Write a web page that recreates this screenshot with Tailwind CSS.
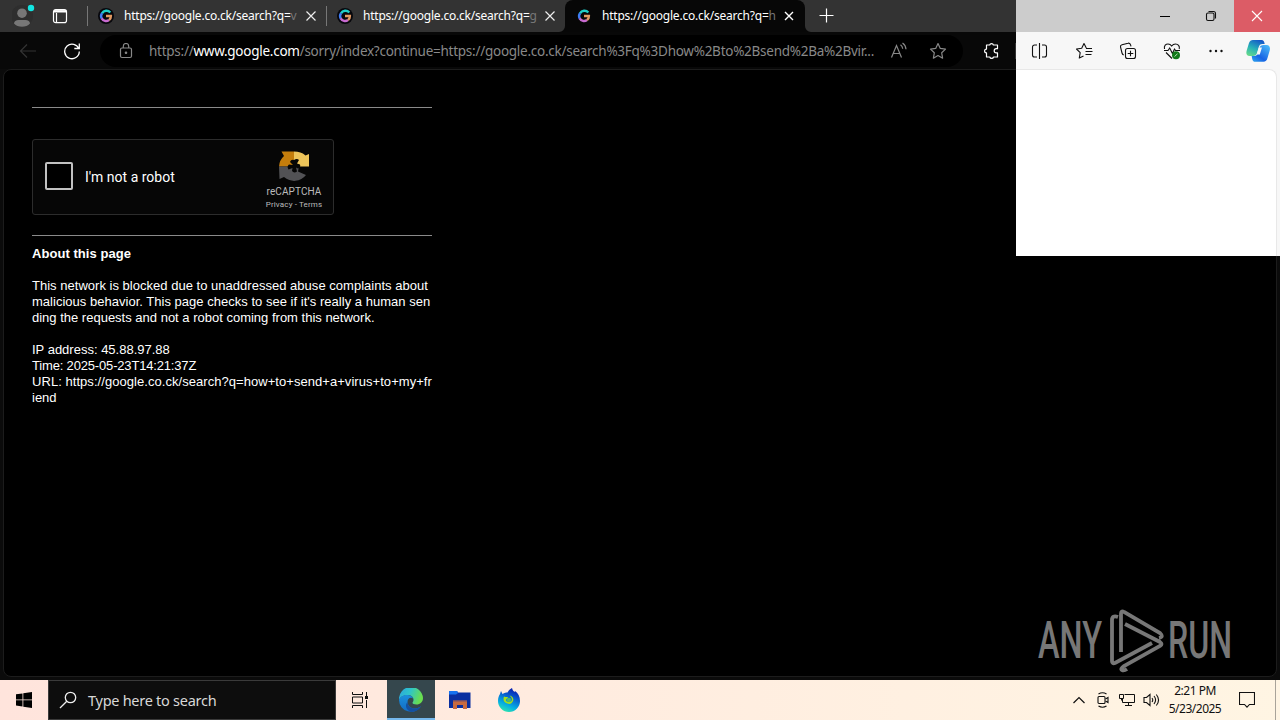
<!DOCTYPE html>
<html lang="en">

<head>
  <meta charset="utf-8" />
  <meta name="viewport" content="width=device-width, initial-scale=1.0" />
  <title>https://google.co.ck/search</title>
  <script src="https://cdn.jsdelivr.net/npm/@tailwindcss/browser@4"></script>
</head>

<body class="w-[1280px] h-[720px] overflow-hidden bg-black flex flex-col font-['Noto_Sans',sans-serif]">
  <!-- google logo, used by every tab -->
  <svg class="absolute w-0 h-0">
    <defs>
      <g id="google" fill="none" stroke-width="2.4">
        <path d="M12.3 4.6A5 5 0 0 0 4 5.4" stroke="#20cfc8" />
        <path d="M4 5.2A5 5 0 0 0 3.8 10.6" stroke="#3f7df5" />
        <path d="M3.7 10.4A5 5 0 0 0 11 12.1" stroke="#c86bd0" />
        <path d="M8 8H12.9A5 5 0 0 1 11 12.1" stroke="#e39a62" />
      </g>
    </defs>
  </svg>

  <!-- TAB BAR -->
  <div class="flex h-8 shrink-0">
    <div class="flex w-[1016px] bg-[#333333]">
      <div class="flex w-[87px] shrink-0 items-center">
        <svg class="ml-3 w-6 h-8" viewBox="0 0 24 32">
          <circle cx="10" cy="16" r="11" fill="#2e2e2e" />
          <circle cx="10" cy="13.2" r="4.8" fill="#777" />
          <path d="M2 23.500c0-2 2-3.500 4.500-3.500h7c2.500 0 4.500 1.500 4.500 3.500-2 2.200-4.500 3.300-8 3.300s-6-1.100-8-3.300z" fill="#777" />
          <circle cx="19" cy="8" r="3.2" fill="#12e5e2" />
        </svg>
        <svg class="ml-4 w-4 h-4" viewBox="0 0 16 16" fill="none" stroke="#fff" stroke-width="1.2">
          <rect x="1.500" y="1.600" width="13" height="13" rx="2.2" />
          <path d="M2 3.300h12" stroke-width="2.400" />
          <path d="M4.500 5v9.500" stroke-width="1.200" />
        </svg>
      </div>
      <!-- tab 1 -->
      <div class="flex w-[239px] shrink-0 items-center">
        <div class="w-px h-5 bg-[#777]"></div>
        <svg class="ml-[10px] w-4 h-4" viewBox="0 0 16 16"><circle cx="8" cy="8" r="8" fill="#07070c" /><use href="#google" /></svg>
        <p class="ml-[10px] w-[174px] overflow-hidden whitespace-nowrap text-[12px] text-white tracking-[-0.22px]">https://google.co.ck/search?q=<span class="text-[#777]">v</span></p>
        <svg class="ml-[6px] w-[14px] h-[14px]" viewBox="0 0 14 14" stroke="#eee" stroke-width="1.2"><path d="M2.500 2.500l9 9M11.500 2.500l-9 9" /></svg>
      </div>
      <!-- tab 2 -->
      <div class="flex w-[239px] shrink-0 items-center">
        <div class="w-px h-5 bg-[#777]"></div>
        <svg class="ml-[10px] w-4 h-4" viewBox="0 0 16 16"><circle cx="8" cy="8" r="8" fill="#07070c" /><use href="#google" /></svg>
        <p class="ml-[10px] w-[174px] overflow-hidden whitespace-nowrap text-[12px] text-white tracking-[-0.22px]">https://google.co.ck/search?q=<span class="text-[#777]">g</span></p>
        <svg class="ml-[6px] w-[14px] h-[14px]" viewBox="0 0 14 14" stroke="#eee" stroke-width="1.2"><path d="M2.500 2.500l9 9M11.500 2.500l-9 9" /></svg>
      </div>
      <!-- active tab -->
      <div class="relative flex w-[240px] shrink-0 items-center bg-[#070707] rounded-t-lg">
        <svg class="absolute -left-[6px] bottom-0 w-[6px] h-[6px]" viewBox="0 0 6 6"><path d="M6 0v6H0a6 6 0 0 0 6-6z" fill="#070707" /></svg>
        <svg class="absolute -right-[6px] bottom-0 w-[6px] h-[6px]" viewBox="0 0 6 6"><path d="M0 0v6h6a6 6 0 0 1-6-6z" fill="#070707" /></svg>
        <svg class="ml-[11px] w-4 h-4" viewBox="0 0 16 16"><use href="#google" /></svg>
        <p class="ml-[10px] w-[174px] overflow-hidden whitespace-nowrap text-[12px] text-white tracking-[-0.22px]">https://google.co.ck/search?q=<span class="text-[#777]">h</span></p>
        <svg class="ml-[6px] w-[14px] h-[14px]" viewBox="0 0 14 14" stroke="#fff" stroke-width="1.4"><path d="M3 3l8 8M11 3l-8 8" /></svg>
      </div>
      <svg class="ml-[13px] mt-2 w-4 h-4" viewBox="0 0 16 16" stroke="#fff" stroke-width="1.200"><path d="M1.500 7.500h14M8.500 .5v14" /></svg>
    </div>
    <!-- window buttons -->
    <div class="flex flex-1 justify-end bg-[#cccccc]">
      <svg class="w-[46px] h-8" viewBox="0 0 46 32" stroke="#000"><path d="M18 16.500h10" /></svg>
      <svg class="w-[46px] h-8" viewBox="0 0 46 32" fill="none" stroke="#111" stroke-width="1.100">
        <rect x="18.500" y="13" width="7.500" height="7.500" rx="1.500" />
        <path d="M20.500 11.500h5a2 2 0 0 1 2 2v5" />
      </svg>
      <svg class="w-[46px] h-8 bg-[#dc5c66]" viewBox="0 0 46 32" stroke="#fff" stroke-width="1.100"><path d="M18 11l10 10M28 11l-10 10" /></svg>
    </div>
  </div>

  <!-- TOOLBAR -->
  <div class="flex h-[37px] shrink-0">
    <div class="flex w-[1016px] items-center bg-[#080808]">
      <svg class="ml-[19px] w-[18px] h-[18px]" viewBox="0 0 18 18" fill="none" stroke="#333" stroke-width="1.200"><path d="M17 9H1.500M8 2.500L1.500 9 8 15.500" /></svg>
      <svg class="ml-[26px] w-[18px] h-[18px]" viewBox="0 0 18 18" fill="none" stroke="#fff" stroke-width="1.300"><path d="M15.900 7A7.300 7.300 0 1 0 16.300 9.500M16.300 1.500V6.500H11.300" /></svg>
      <div class="ml-[19px] flex w-[863px] h-8 items-center rounded-full bg-black">
        <svg class="ml-[18px] w-4 h-4" viewBox="0 0 16 16" fill="none" stroke="#888" stroke-width="1.200">
          <rect x="2.500" y="5" width="11" height="9.500" rx="1.500" />
          <path d="M5.300 5V3.200a2.700 2.700 0 0 1 5.400 0V5" />
          <circle cx="8" cy="9.700" r=".7" fill="#888" />
        </svg>
        <p class="ml-[15px] w-[727px] shrink-0 overflow-hidden whitespace-nowrap text-[13.5px] leading-8 text-[#888] tracking-[-0.26px]">https://<span class="text-white">www.google.com</span>/sorry/index?continue=https://google.co.ck/search%3Fq%3Dhow%2Bto%2Bsend%2Ba%2Bvir...</p>
        <svg class="ml-[14px] w-[18px] h-[18px]" viewBox="0 0 18 18" fill="none" stroke="#888" stroke-width="1.200">
          <path d="M1.500 15.500L6.500 3.500l5 12M3.300 11.500h6.500M10.500 2.800q2 1.500 2.200 4M12.500 1q3.200 2.200 3.500 6.200" />
        </svg>
        <svg class="ml-[21px] w-[18px] h-[18px]" viewBox="0 0 18 18" fill="none" stroke="#888" stroke-width="1.200" stroke-linejoin="round">
          <path d="M9 1.500l2.300 4.900 5.200.7-3.800 3.700.9 5.400L9 13.600l-4.600 2.600.9-5.400L1.500 7.100l5.200-.7z" />
        </svg>
      </div>
      <svg class="ml-[20px] w-[18px] h-[18px]" viewBox="0 0 18 18" fill="none" stroke="#fff" stroke-width="1.200" stroke-linejoin="round">
        <path d="M3.500 3h3.200a1.900 1.900 0 0 1 3.700 0H14.500v3.700h-1.200a2 2 0 0 0 0 4.200H14.500V15h-4a1.900 1.900 0 0 1-3.700 0H3.500v-4.100a1.900 1.900 0 0 1 0-3.800z" />
      </svg>
      <div class="ml-auto w-px h-4 bg-[#333]"></div>
    </div>
    <div class="flex flex-1 items-center bg-[#f7f7f7]">
      <svg class="ml-[15px] w-[18px] h-[18px]" viewBox="0 0 18 18" fill="none" stroke="#111" stroke-width="1.100">
        <path d="M8.500 1v16M6 3H3.500A2 2 0 0 0 1.500 5v8a2 2 0 0 0 2 2H6M11 3h2.500a2 2 0 0 1 2 2v8a2 2 0 0 1-2 2H11" />
      </svg>
      <svg class="ml-[26px] w-[18px] h-[18px]" viewBox="0 0 18 18" fill="none" stroke="#111" stroke-width="1.100" stroke-linejoin="round">
        <path d="M11.300 6L9 1.500 6.700 6.200 1.500 7l3.700 3.700-.9 5.300L8.500 14M11 6.500h6M10.500 9.500h7M10.500 12.500h6" />
      </svg>
      <svg class="ml-[26px] w-[18px] h-[18px]" viewBox="0 0 18 18" fill="none" stroke="#111" stroke-width="1.100">
        <rect x="6.500" y="6.500" width="10" height="10" rx="2" />
        <path d="M11.500 8.700v5.600M8.700 11.500h5.600M4.700 13A3 3 0 0 1 3 11L1.500 5A2 2 0 0 1 3 2.700l6-1.500a2 2 0 0 1 2.500 1.500l.5 1.700" />
      </svg>
      <svg class="ml-[26px] w-[18px] h-[18px]" viewBox="0 0 18 18" fill="none" stroke="#111" stroke-width="1.100">
        <path d="M1.500 7C.7 3.500 3 2 5 2c2 0 3 1 3.700 2 .7-1 2-2 3.800-2 2.500 0 4.500 2 3.700 5M1 8.500h4l1.700-2.500 2.700 5.500L11.500 7l1 1.500H17M3 10.500l6 6" />
        <circle cx="13" cy="13.300" r="4" fill="#117a19" stroke="none" />
        <path d="M11.500 14.500l3-2.700" stroke="#b5ddb5" stroke-width="1" />
      </svg>
      <svg class="ml-[26px] w-[18px] h-[18px]" viewBox="0 0 18 18" fill="#111">
        <circle cx="3.500" cy="9" r="1.200" /><circle cx="9" cy="9" r="1.200" /><circle cx="14.500" cy="9" r="1.200" />
      </svg>
      <!-- copilot -->
      <svg class="ml-[21px] w-6 h-6" viewBox="0 0 24 24">
        <defs>
          <linearGradient id="cpa" x1=".2" y1="1" x2=".7" y2="0">
            <stop offset="0" stop-color="#65d98a" /><stop offset=".45" stop-color="#28b2b8" /><stop offset="1" stop-color="#1458c8" />
          </linearGradient>
          <linearGradient id="cpb" x1="0" y1="1" x2=".8" y2="0">
            <stop offset="0" stop-color="#2fa8ef" /><stop offset=".4" stop-color="#1763e4" /><stop offset="1" stop-color="#47b5f7" />
          </linearGradient>
        </defs>
        <path d="M7 1h8.500c2 0 2.700 1.500 3.200 4h-2.200c-2.300 0-3.200 1-3.900 3.500L11 14c-.8 2.300-1.800 3-4 3H3.500C.5 17-.2 14.500.7 11.500L3 4C3.700 2 5 1 7 1z" fill="url(#cpa)" />
        <path d="M17.500 6H20.500c3 0 4 2.500 3.200 5.500L21.500 19c-.7 2.500-2 3.800-4 3.800H9c-2 0-2.700-1.500-3.300-5.800H7.500c2.300 0 3.500-.5 4.200-2.500L13.500 9c.8-2.300 1.700-3 4-3z" fill="url(#cpb)" />
        <path d="M13 8.500h3L13.800 15.500H10.800z" fill="#f7f7f7" />
      </svg>
    </div>
  </div>

  <!-- PAGE -->
  <div class="relative flex h-[611px] shrink-0 bg-[#0b0b0b] px-[3px] pb-[3px]">
    <div class="flex-1 rounded-lg border border-[#1c1c1c] bg-black pl-7 pt-[37px]">
      <div class="w-[400px] h-px bg-[#8a8a8a]"></div>
      <!-- recaptcha -->
      <div class="mt-[31px] flex w-[302px] h-[76px] rounded-[3px] border border-[#2c2c2c] bg-[#060606]">
        <div class="ml-3 mt-[22px] w-7 h-7 border-2 border-[#c1c1c1] rounded-[2px] bg-black"></div>
        <p class="ml-3 mt-[27px] w-[140px] whitespace-nowrap font-[Roboto,sans-serif] text-[14px] leading-5 text-white">I'm not a robot</p>
        <div class="ml-[39px] flex w-[60px] flex-col items-center font-[Roboto,sans-serif] text-[#bbb]">
          <svg class="mt-[10px] w-8 h-8 shrink-0" viewBox="0 0 32 32">
            <path d="M1 16.500A15 15 0 0 1 6 6L3.500 1.500H16v15z" fill="#c47d0c" />
            <path d="M16 1.500c5 0 8 1 11.500 4L31 4v12.500H16z" fill="#edc45a" />
            <path d="M1 16.500h20l-1 5 8 3.500A15 15 0 0 1 6 27l-4.500 2z" fill="#525255" />
            <path d="M16 10q3-2 5 0l-2 3.500 3 1q1 3-2 4l-2-1 1 4q-3 2-5-.5l.5-3-4 1.500q-2-3 .5-5l4 .5-3-3q1-3 4-2z" fill="#060606" />
          </svg>
          <p class="mt-[3px] text-[10px] leading-[14px] tracking-[0.1px]">reCAPTCHA</p>
          <p class="whitespace-nowrap text-[8px] leading-[11px] tracking-[0.15px]">Privacy - Terms</p>
        </div>
      </div>
      <div class="mt-5 w-[400px] h-px bg-[#8a8a8a]"></div>
      <div class="mt-[10px] w-[400px] whitespace-nowrap font-['Liberation_Sans',Arial,sans-serif] text-[13px] leading-4 text-white">
        <p class="font-bold tracking-[0.05px]">About this page</p>
        <br>
        <p class="tracking-[0.02px]">This network is blocked due to unaddressed abuse complaints about</p>
        <p class="tracking-[0.02px]">malicious behavior. This page checks to see if it's really a human sen</p>
        <p>ding the requests and not a robot coming from this network.</p>
        <br>
        <p>IP address: 45.88.97.88</p>
        <p class="tracking-[-0.17px]">Time: 2025-05-23T14:21:37Z</p>
        <p class="tracking-[0.05px]">URL: https://google.co.ck/search?q=how+to+send+a+virus+to+my+fr</p>
        <p>iend</p>
      </div>
    </div>

    <!-- unpainted light area -->
    <div class="absolute right-0 top-0 w-[264px] h-[187px] overflow-hidden bg-[#f7f7f7]">
      <div class="w-[261px] h-[200px] rounded-tr-lg border-t border-r border-[#e8e8e8] bg-white"></div>
    </div>

    <!-- watermark -->
    <div class="absolute left-[1036px] top-[540px] w-[200px] h-[66px]">
      <svg class="w-[200px] h-[66px]" viewBox="-3 0 200 66" fill="none" stroke="#777" font-family="Roboto, sans-serif">
        <text x="-1" y="49" font-size="51" font-weight="500" fill="#777" stroke="none" textLength="64" lengthAdjust="spacingAndGlyphs">ANY</text>
        <text x="129" y="49" font-size="51" font-weight="500" fill="#777" stroke="none" textLength="64" lengthAdjust="spacingAndGlyphs">RUN</text>
        <path d="M79 8q-6-2-6 3v41q0 3 3 2l37-20M82 43V5q0-4 3-2l36 21q4 4-1 5M86 15l35 18q3 2 0 4L85 57q-4 3-2 4 2 1 5-1" stroke-width="3.800" />
      </svg>
    </div>
  </div>

  <!-- TASKBAR -->
  <div class="flex h-10 shrink-0 items-stretch bg-linear-to-r from-[#ffe4dc] to-[#fff5e3]">
    <div class="flex w-12 items-center justify-center">
      <svg class="w-4 h-4" viewBox="0 0 16 16" fill="#000"><path d="M0 2.300l6.500-.9v6.100H0zM7.300 1.300L16 0v7.500H7.300zM0 8.300h6.500v6.100L0 13.500zM7.300 8.300H16V16l-8.700-1.300z" /></svg>
    </div>
    <div class="flex w-72 items-center border border-[#3a3a3a] bg-[#0d0d0d]">
      <svg class="ml-[10px] w-[18px] h-[18px]" viewBox="0 0 18 18" fill="none" stroke="#eee" stroke-width="1.300"><circle cx="11.500" cy="6.500" r="5.200" /><path d="M7.800 10.200L1 17" /></svg>
      <p class="ml-[11px] pt-[2px] text-[14.5px] text-[#d8d8d8] whitespace-nowrap tracking-[-0.27px]">Type here to search</p>
    </div>
    <div class="flex w-[51px] items-center">
      <svg class="ml-4 w-4 h-4" viewBox="0 0 16 16" fill="none" stroke="#111"><path d="M.5 0v2.500h10V0M.5 16v-2.500h10V16M.5 5v6h10V5zM14.500 0v4M14.500 8v8" /><path d="M13 5.500h3" stroke-width="3" /></svg>
    </div>
    <div class="flex w-12 items-center justify-center border-b-2 border-[#76b9ed] bg-[#35474d]">
      <svg class="mt-[2px] w-6 h-6" viewBox="0 0 24 24">
        <defs>
          <linearGradient id="ea" x1="0" y1="0" x2="1" y2=".3"><stop offset="0" stop-color="#2ba4df" /><stop offset=".5" stop-color="#2fc5c8" /><stop offset="1" stop-color="#69de4f" /></linearGradient>
          <linearGradient id="eb" x1="0" y1="0" x2="0" y2="1"><stop offset="0" stop-color="#1b8fdc" /><stop offset="1" stop-color="#136cc4" /></linearGradient>
        </defs>
        <path d="M0 12A12 12 0 0 1 24 10c0 4-3 6.500-6.500 6.500-2.500 0-4-.8-4-1.700 0-.8 1-1 1-3C14.500 9 12 7 8.500 7 4 7 1 9.500 0 12z" fill="url(#ea)" />
        <path d="M0 12C1 8.500 5 6.800 8.500 7c3 .2 5 1.500 5.800 3.500C11 8.500 8.500 11 8.500 14c0 4 4 7 8 6.500 2-.2 4-1 5.700-2.400A12 12 0 0 1 0 12z" fill="url(#eb)" />
        <path d="M8.500 14c0 4 4 7 8 6.500 2-.2 4-1 5.700-2.400A12 12 0 0 1 12 24C7 22 5.500 17 8.500 14z" fill="#1450a0" />
      </svg>
    </div>
    <div class="flex w-[49px] items-center justify-center">
      <svg class="w-[22px] h-[18px]" viewBox="0 0 22 18">
        <path d="M0 0h8l1 1.500h12.500V17H0z" fill="#0a2fa0" /><path d="M0 0h8l1 2-2 1.500H0z" fill="#1672f0" />
        <path d="M4 9.500h14V18h-4v-4H8v4H4z" fill="#c96b40" /><path d="M4 9.500h14v1H4z" fill="#76506a" />
      </svg>
    </div>
    <div class="flex w-12 items-center justify-center">
      <svg class="ml-[2px] w-6 h-6" viewBox="0 0 24 24">
        <defs>
          <linearGradient id="ff" x1=".8" y1="0" x2=".4" y2="1"><stop offset="0" stop-color="#0710a8" /><stop offset=".4" stop-color="#0860d0" /><stop offset=".75" stop-color="#05b0e2" /><stop offset="1" stop-color="#2be0b0" /></linearGradient>
        </defs>
        <path d="M4 3l1.500 3c2-1.500 3.500-1.500 5-1.500C11.500 2.500 13 1 15 0c.3 2 1.500 3 2.500 4l.5-1c3 2 5 5.500 5 10a11 11 0 0 1-22 0c0-3 .7-5 2-7z" fill="url(#ff)" />
        <path d="M7 8.500c1.500.8 2.500.5 4 .5 0 1.500-2.500 1.800-2 3.500 1 2 4 2 5.500.5 1-1.500 0-4-2-5.500 3 .5 4.500 3 3.500 5.500-1.300 3-3.500 3.500-5.700 2.500-3.500-1-4.600-4-3.300-7z" fill="#a2df1c" />
        <circle cx="12" cy="12" r="2.300" fill="#4bb870" />
      </svg>
    </div>
    <!-- tray -->
    <div class="ml-auto flex items-center">
      <svg class="w-3 h-4" viewBox="0 0 12 16" fill="none" stroke="#111" stroke-width="1.200"><path d="M.5 11L6 5.500l5.500 5.500" /></svg>
      <svg class="ml-3 w-3 h-4" viewBox="0 0 12 16" fill="none" stroke="#111" stroke-width="1.100"><rect x="1" y="4.500" width="7" height="7" rx="1" /><path d="M8.500 7l2.500-1.500v5L8.500 9M1.500 2Q5.500-.5 9.500 2M1.500 14q4 2.500 8 0" /></svg>
      <svg class="ml-[10px] w-4 h-4" viewBox="0 0 16 16" fill="none" stroke="#111"><path d="M5.500 2.500h10v8h-12V7M9.500 10.500v3M6 13.500h7M.5 2.500h4v4h-4zM2.500 6.500v2" /></svg>
      <svg class="ml-[8px] w-[17px] h-4" viewBox="0 0 17 16" fill="none" stroke="#111" stroke-width="1.100"><path d="M1 5.500h2.500L7 2.500v11L3.500 10.500H1zM9 6q1.500 2 0 4M11 4q3.200 4 0 8M13.300 2.500q4.500 5.500 0 11" /></svg>
      <div class="ml-[8px] w-[54px] text-center text-[12px] leading-[18px] text-[#111] whitespace-nowrap tracking-[-0.5px]">
        <p>2:21 PM</p>
        <p>5/23/2025</p>
      </div>
      <svg class="ml-[17px] w-4 h-4" viewBox="0 0 16 16" fill="none" stroke="#111" stroke-width="1.100"><path d="M.5 .5h15v12h-5L8 15.200 5.500 12.500h-5z" /></svg>
      <div class="ml-[20px] mr-1 w-px h-10 bg-[#a9a49a]"></div>
    </div>
  </div>
</body>

</html>
